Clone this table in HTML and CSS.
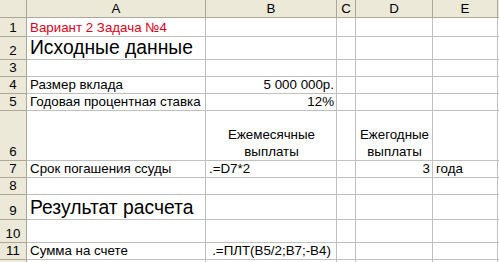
FILE: index.html
```html
<!DOCTYPE html>
<html lang="ru">
<head>
<meta charset="utf-8">
<link rel="stylesheet" href="styles.css">
</head>
<body>
<div class="sheet">
  <div class="h corner"></div>
  <div class="h col">A</div>
  <div class="h col">B</div>
  <div class="h col">C</div>
  <div class="h col">D</div>
  <div class="h col">E</div>
  <div class="h col last"></div>

  <div class="h rn">1</div>
  <div class="c red">Вариант 2 Задача №4</div><div class="c"></div><div class="c"></div><div class="c"></div><div class="c"></div><div class="c last"></div>

  <div class="h rn">2</div>
  <div class="c big">Исходные данные</div><div class="c"></div><div class="c"></div><div class="c"></div><div class="c"></div><div class="c last"></div>

  <div class="h rn">3</div>
  <div class="c"></div><div class="c"></div><div class="c"></div><div class="c"></div><div class="c"></div><div class="c last"></div>

  <div class="h rn">4</div>
  <div class="c">Размер вклада</div><div class="c right">5 000 000р.</div><div class="c"></div><div class="c"></div><div class="c"></div><div class="c last"></div>

  <div class="h rn">5</div>
  <div class="c">Годовая процентная ставка</div><div class="c right">12%</div><div class="c"></div><div class="c"></div><div class="c"></div><div class="c last"></div>

  <div class="h rn">6</div>
  <div class="c"></div><div class="c center wrap">Ежемесячные<br>выплаты</div><div class="c"></div><div class="c center wrap">Ежегодные<br>выплаты</div><div class="c"></div><div class="c last"></div>

  <div class="h rn">7</div>
  <div class="c">Срок погашения ссуды</div><div class="c">.=D7*2</div><div class="c"></div><div class="c right">3</div><div class="c">года</div><div class="c last"></div>

  <div class="h rn">8</div>
  <div class="c"></div><div class="c"></div><div class="c"></div><div class="c"></div><div class="c"></div><div class="c last"></div>

  <div class="h rn">9</div>
  <div class="c big">Результат расчета</div><div class="c"></div><div class="c"></div><div class="c"></div><div class="c"></div><div class="c last"></div>

  <div class="h rn">10</div>
  <div class="c"></div><div class="c"></div><div class="c"></div><div class="c"></div><div class="c"></div><div class="c last"></div>

  <div class="h rn">11</div>
  <div class="c">Сумма на счете</div><div class="c center">.=ПЛТ(B5/2;B7;-B4)</div><div class="c"></div><div class="c"></div><div class="c"></div><div class="c last"></div>

  <div class="h rn"></div>
  <div class="c"></div><div class="c"></div><div class="c"></div><div class="c"></div><div class="c"></div><div class="c last"></div>
</div>
</body>
</html>
```
FILE: styles.css
```css
html, body {
  margin: 0;
  padding: 0;
  background: #ffffff;
}
.sheet {
  display: grid;
  grid-template-columns: 27px 179px 131px 19px 77px 65px 1px;
  grid-template-rows: 18px 19px 23px 17px 17px 17px 50px 17px 17px 25px 23px 17px 17px;
  width: 499px;
  height: 262px;
  overflow: hidden;
  font-family: "Liberation Sans", Arial, sans-serif;
  font-size: 13.33px;
  color: #000;
}
.h {
  background: #ece9d8;
  box-sizing: border-box;
  border-right: 1px solid #aca899;
  border-bottom: 1px solid #aca899;
  display: flex;
  justify-content: center;
  align-items: flex-end;
  padding-bottom: 1px;
  line-height: 15px;
}
.c {
  box-sizing: border-box;
  border-right: 1px solid #c0c0c0;
  border-bottom: 1px solid #c0c0c0;
  display: flex;
  align-items: flex-end;
  padding: 0 2px 1px 3px;
  line-height: 15px;
  white-space: nowrap;
  min-width: 0;
}
.last {
  border-right: none;
}
.red {
  color: #e0001a;
}
.big {
  font-size: 19.3px;
  line-height: 21px;
}
.right {
  justify-content: flex-end;
}
.center {
  justify-content: center;
  text-align: center;
}
.wrap {
  white-space: normal;
  line-height: 17px;
  padding-bottom: 0;
}
```
